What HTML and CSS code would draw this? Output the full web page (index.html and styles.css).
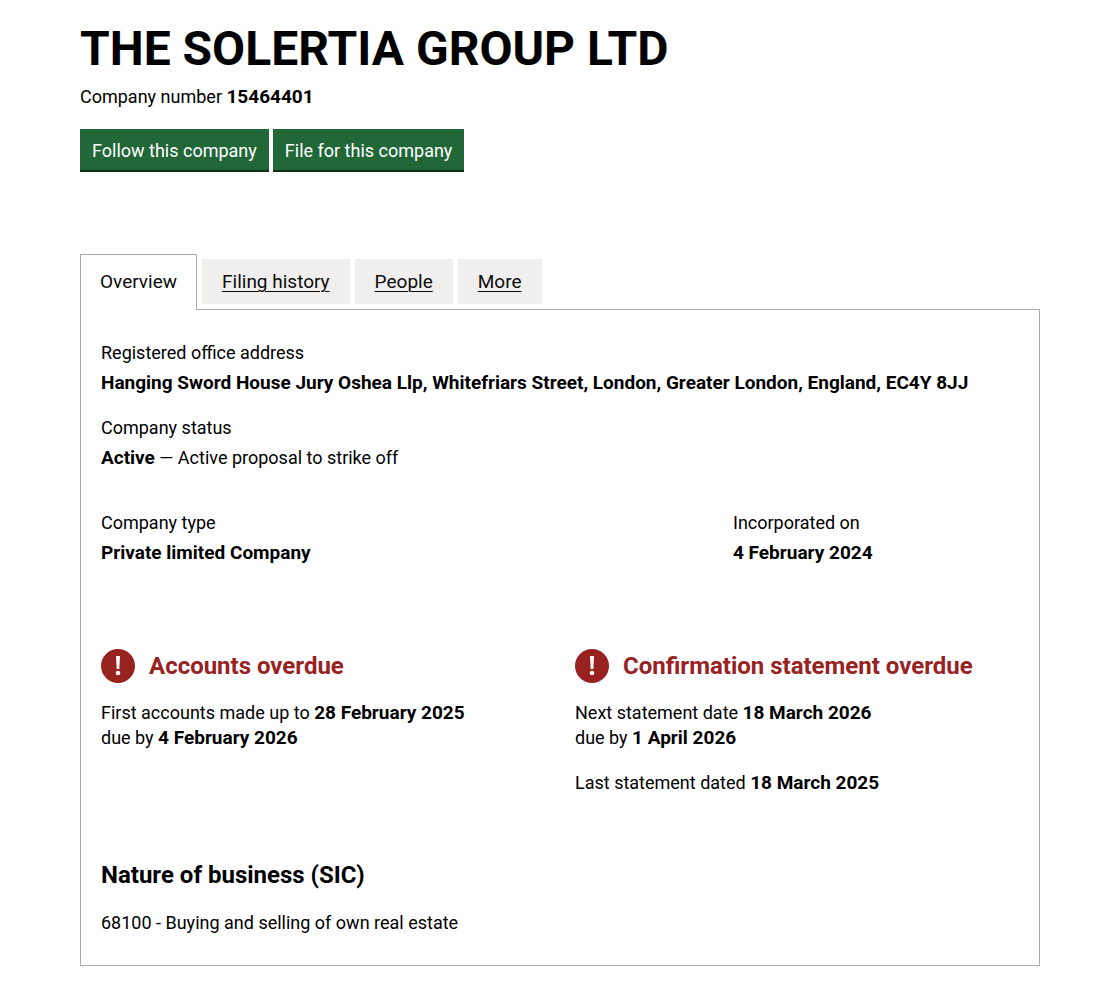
FILE: index.html
```html
<!DOCTYPE html>
<html lang="en">
<head>
  <meta charset="UTF-8" />
  <meta name="viewport" content="width=device-width, initial-scale=1" />
  <title>THE SOLERTIA GROUP LTD</title>
  <link rel="stylesheet" href="styles.css">
</head>
<body>
  <main class="container">
    <header class="company-header">
      <h1>THE SOLERTIA GROUP LTD</h1>
      <p class="company-number">Company number <strong>15464401</strong></p>
      <div class="actions">
        <button type="button" class="button">Follow this company</button>
        <button type="button" class="button">File for this company</button>
      </div>
    </header>

    <nav class="tabs" aria-label="Company">
      <a href="#overview" class="tab tab-selected" aria-current="page">Overview</a>
      <a href="#filing-history" class="tab">Filing history</a>
      <a href="#people" class="tab">People</a>
      <a href="#more" class="tab">More</a>
    </nav>

    <section class="panel" id="overview">
      <dl>
        <dt>Registered office address</dt>
        <dd><strong>Hanging Sword House Jury Oshea Llp, Whitefriars Street, London, Greater London, England, EC4Y 8JJ</strong></dd>
      </dl>
      <dl>
        <dt>Company status</dt>
        <dd><strong>Active</strong> — Active proposal to strike off</dd>
      </dl>

      <div class="row row-type">
        <dl>
          <dt>Company type</dt>
          <dd><strong>Private limited Company</strong></dd>
        </dl>
        <dl>
          <dt>Incorporated on</dt>
          <dd><strong>4 February 2024</strong></dd>
        </dl>
      </div>

      <div class="row row-filings">
        <div class="filing">
          <h2 class="overdue">
            <svg class="icon" viewBox="0 0 34 34" aria-hidden="true">
              <circle cx="17" cy="17" r="17" fill="#98221f" />
              <path d="M15 7h4l-.7 13h-2.600z" fill="#fff" />
              <circle cx="17" cy="24" r="2.300" fill="#fff" />
            </svg>
            Accounts overdue
          </h2>
          <p>First accounts made up to <strong>28 February 2025</strong><br>due by <strong>4 February 2026</strong></p>
        </div>
        <div class="filing">
          <h2 class="overdue">
            <svg class="icon" viewBox="0 0 34 34" aria-hidden="true">
              <circle cx="17" cy="17" r="17" fill="#98221f" />
              <path d="M15 7h4l-.7 13h-2.600z" fill="#fff" />
              <circle cx="17" cy="24" r="2.300" fill="#fff" />
            </svg>
            Confirmation statement overdue
          </h2>
          <p>Next statement date <strong>18 March 2026</strong><br>due by <strong>1 April 2026</strong></p>
          <p>Last statement dated <strong>18 March 2025</strong></p>
        </div>
      </div>

      <h2 class="sic-title">Nature of business (SIC)</h2>
      <p>68100 - Buying and selling of own real estate</p>
    </section>
  </main>
</body>
</html>
```

FILE: styles.css
```css
* {
  box-sizing: border-box;
}
body {
  margin: 0;
  background: #fff;
  color: #000;
  font-family: Roboto, "Liberation Sans", sans-serif;
  font-size: 18px;
  line-height: 25px;
}
h1, h2, p, dl, dd {
  margin: 0;
}
strong {
  font-size: 19px;
  line-height: 1;
}
.container {
  max-width: 1098px;
  padding: 24px 58px 17px 80px;
}
h1 {
  font-size: 48px;
  line-height: 50px;
  margin-bottom: 10px;
}
.actions {
  display: flex;
  flex-wrap: wrap;
  gap: 4px;
  margin-top: 20px;
}
.button {
  padding: 8px 12px;
  border: 0;
  background: #216738;
  box-shadow: inset 0 -2px 0 #0f2e19;
  color: #fff;
  font: inherit;
  line-height: 27px;
  cursor: pointer;
}
.tabs {
  display: flex;
  align-items: flex-start;
  gap: 5px;
  margin-top: 82px;
  font-size: 19px;
}
.tab {
  margin-top: 5px;
  padding: 10px 20px;
  background: #f0efee;
  color: #0b0c0c;
  text-decoration-thickness: 1px;
  text-underline-offset: 3px;
}
.tab-selected {
  position: relative;
  margin-top: 0;
  margin-bottom: -1px;
  padding: 14px 19px 16px;
  border: 1px solid #aaabac;
  border-bottom: 0;
  background: #fff;
  text-decoration: none;
}
.panel {
  padding: 30px 20px;
  border: 1px solid #aaabac;
}
dl {
  margin-bottom: 20px;
}
dd {
  margin-top: 5px;
}
.row {
  display: grid;
  margin-right: -30px;
}
.row-type {
  grid-template-columns: 2fr 1fr;
  margin-top: 40px;
}
.row-filings {
  grid-template-columns: 1fr 1fr;
  margin-top: 64px;
}
.row > * {
  padding-right: 30px;
}
.panel p + p {
  margin-top: 20px;
}
h2 {
  font-size: 24px;
  line-height: 30px;
}
.overdue {
  display: flex;
  align-items: center;
  gap: 14px;
  margin-bottom: 17px;
  color: #98221f;
}
.icon {
  flex: none;
  width: 34px;
  height: 34px;
}
.sic-title {
  margin-top: 65px;
  margin-bottom: 20px;
}
```
